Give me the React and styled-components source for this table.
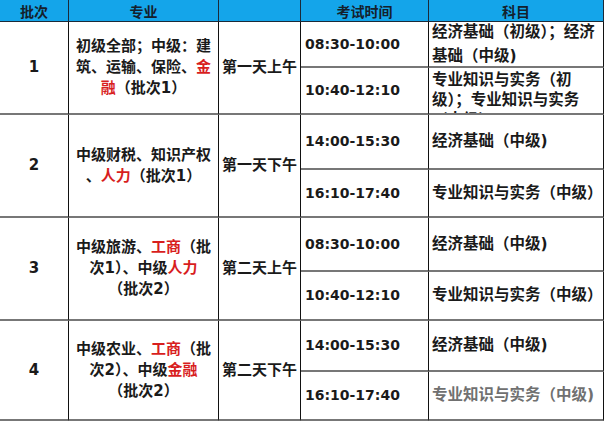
import styled, { createGlobalStyle } from "styled-components";

const Global = createGlobalStyle`
  html, body { margin: 0; padding: 0; background: #fff; }
  body { font-family: "DejaVu Sans", "Noto Sans CJK SC", sans-serif; }
`;

const Table = styled.div`
  display: grid;
  width: 604px;
  height: 421px;
  grid-template-columns: 69px 150px 82px 128px 175px;
  grid-template-rows: 22px 46px 47px 55px 48px 54px 49px 51px 49px;
  box-sizing: border-box;
  overflow: hidden;
`;

const Head = styled.div`
  background: #14a5ea;
  color: #14202c;
  font-size: 14px;
  font-weight: 700;
  display: flex;
  align-items: center;
  justify-content: center;
  border-right: 1px solid #1b2a38;
  border-bottom: 1px solid #1b2a38;
  box-sizing: border-box;
`;

const Cell = styled.div`
  grid-row: span ${(p) => p.$span || 1};
  display: flex;
  flex-direction: column;
  justify-content: ${(p) => (p.$top ? "flex-start" : "center")};
  align-items: ${(p) => (p.$left ? "flex-start" : "center")};
  text-align: ${(p) => (p.$left ? "left" : "center")};
  padding: ${(p) => (p.$top ? "2px 0 0 3px" : p.$left ? "0 0 0 3px" : "0")};
  border-right: 1px solid #111;
  border-bottom: 2px solid #777;
  box-sizing: border-box;
  overflow: hidden;
  font-size: ${(p) => p.$fs || "15px"};
  font-weight: 700;
  line-height: ${(p) => p.$lh || "21px"};
  color: ${(p) => (p.$faded ? "#707070" : "#1a1a1a")};
  white-space: nowrap;
`;

const Red = styled.span`
  color: #d81e1e;
`;

const Time = styled.span`
  font-family: "DejaVu Sans", sans-serif;
  font-size: 14px;
  font-weight: 700;
  padding-left: 1px;
`;

const rows = [
  {
    no: "1",
    major: [
      ["初级全部；中级：建"],
      ["筑、运输、保险、", <Red key="a">金</Red>],
      [<Red key="b">融</Red>, "（批次1）"],
    ],
    day: "第一天上午",
    slots: [
      { time: "08:30-10:00", subj: ["经济基础（初级）；经济", "基础（中级)"], lh: "24px" },
      { time: "10:40-12:10", subj: ["专业知识与实务（初", "级）；专业知识与实务", "（中级）"], top: true, lh: "20px" },
    ],
  },
  {
    no: "2",
    major: [["中级财税、知识产权"], ["、", <Red key="a">人力</Red>, "（批次1）"]],
    day: "第一天下午",
    slots: [
      { time: "14:00-15:30", subj: ["经济基础（中级)"] },
      { time: "16:10-17:40", subj: ["专业知识与实务（中级）"] },
    ],
  },
  {
    no: "3",
    major: [
      ["中级旅游、", <Red key="a">工商</Red>, "（批"],
      ["次1）、中级", <Red key="b">人力</Red>],
      ["（批次2）"],
    ],
    day: "第二天上午",
    slots: [
      { time: "08:30-10:00", subj: ["经济基础（中级)"] },
      { time: "10:40-12:10", subj: ["专业知识与实务（中级）"] },
    ],
  },
  {
    no: "4",
    major: [
      ["中级农业、", <Red key="a">工商</Red>, "（批"],
      ["次2）、中级", <Red key="b">金融</Red>],
      ["（批次2）"],
    ],
    day: "第二天下午",
    slots: [
      { time: "14:00-15:30", subj: ["经济基础（中级)"] },
      { time: "16:10-17:40", subj: ["专业知识与实务（中级)"], faded: true },
    ],
  },
];

export default function App() {
  return (
    <>
      <Global />
      <Table>
        <Head>批次</Head>
        <Head>专业</Head>
        <Head />
        <Head>考试时间</Head>
        <Head>科目</Head>
        {rows.map((r) => [
          <Cell key={r.no + "n"} $span={2} $fs="15px">{r.no}</Cell>,
          <Cell key={r.no + "m"} $span={2}>
            {r.major.map((line, i) => (
              <div key={i}>{line}</div>
            ))}
          </Cell>,
          <Cell key={r.no + "d"} $span={2}>{r.day}</Cell>,
          ...r.slots.flatMap((s, i) => [
            <Cell key={r.no + "t" + i} $left>
              <Time>{s.time}</Time>
            </Cell>,
            <Cell key={r.no + "s" + i} $left $top={s.top} $lh={s.lh} $faded={s.faded} $fs="15.5px">
              {s.subj.map((l, j) => (
                <div key={j}>{l}</div>
              ))}
            </Cell>,
          ]),
        ])}
      </Table>
    </>
  );
}
